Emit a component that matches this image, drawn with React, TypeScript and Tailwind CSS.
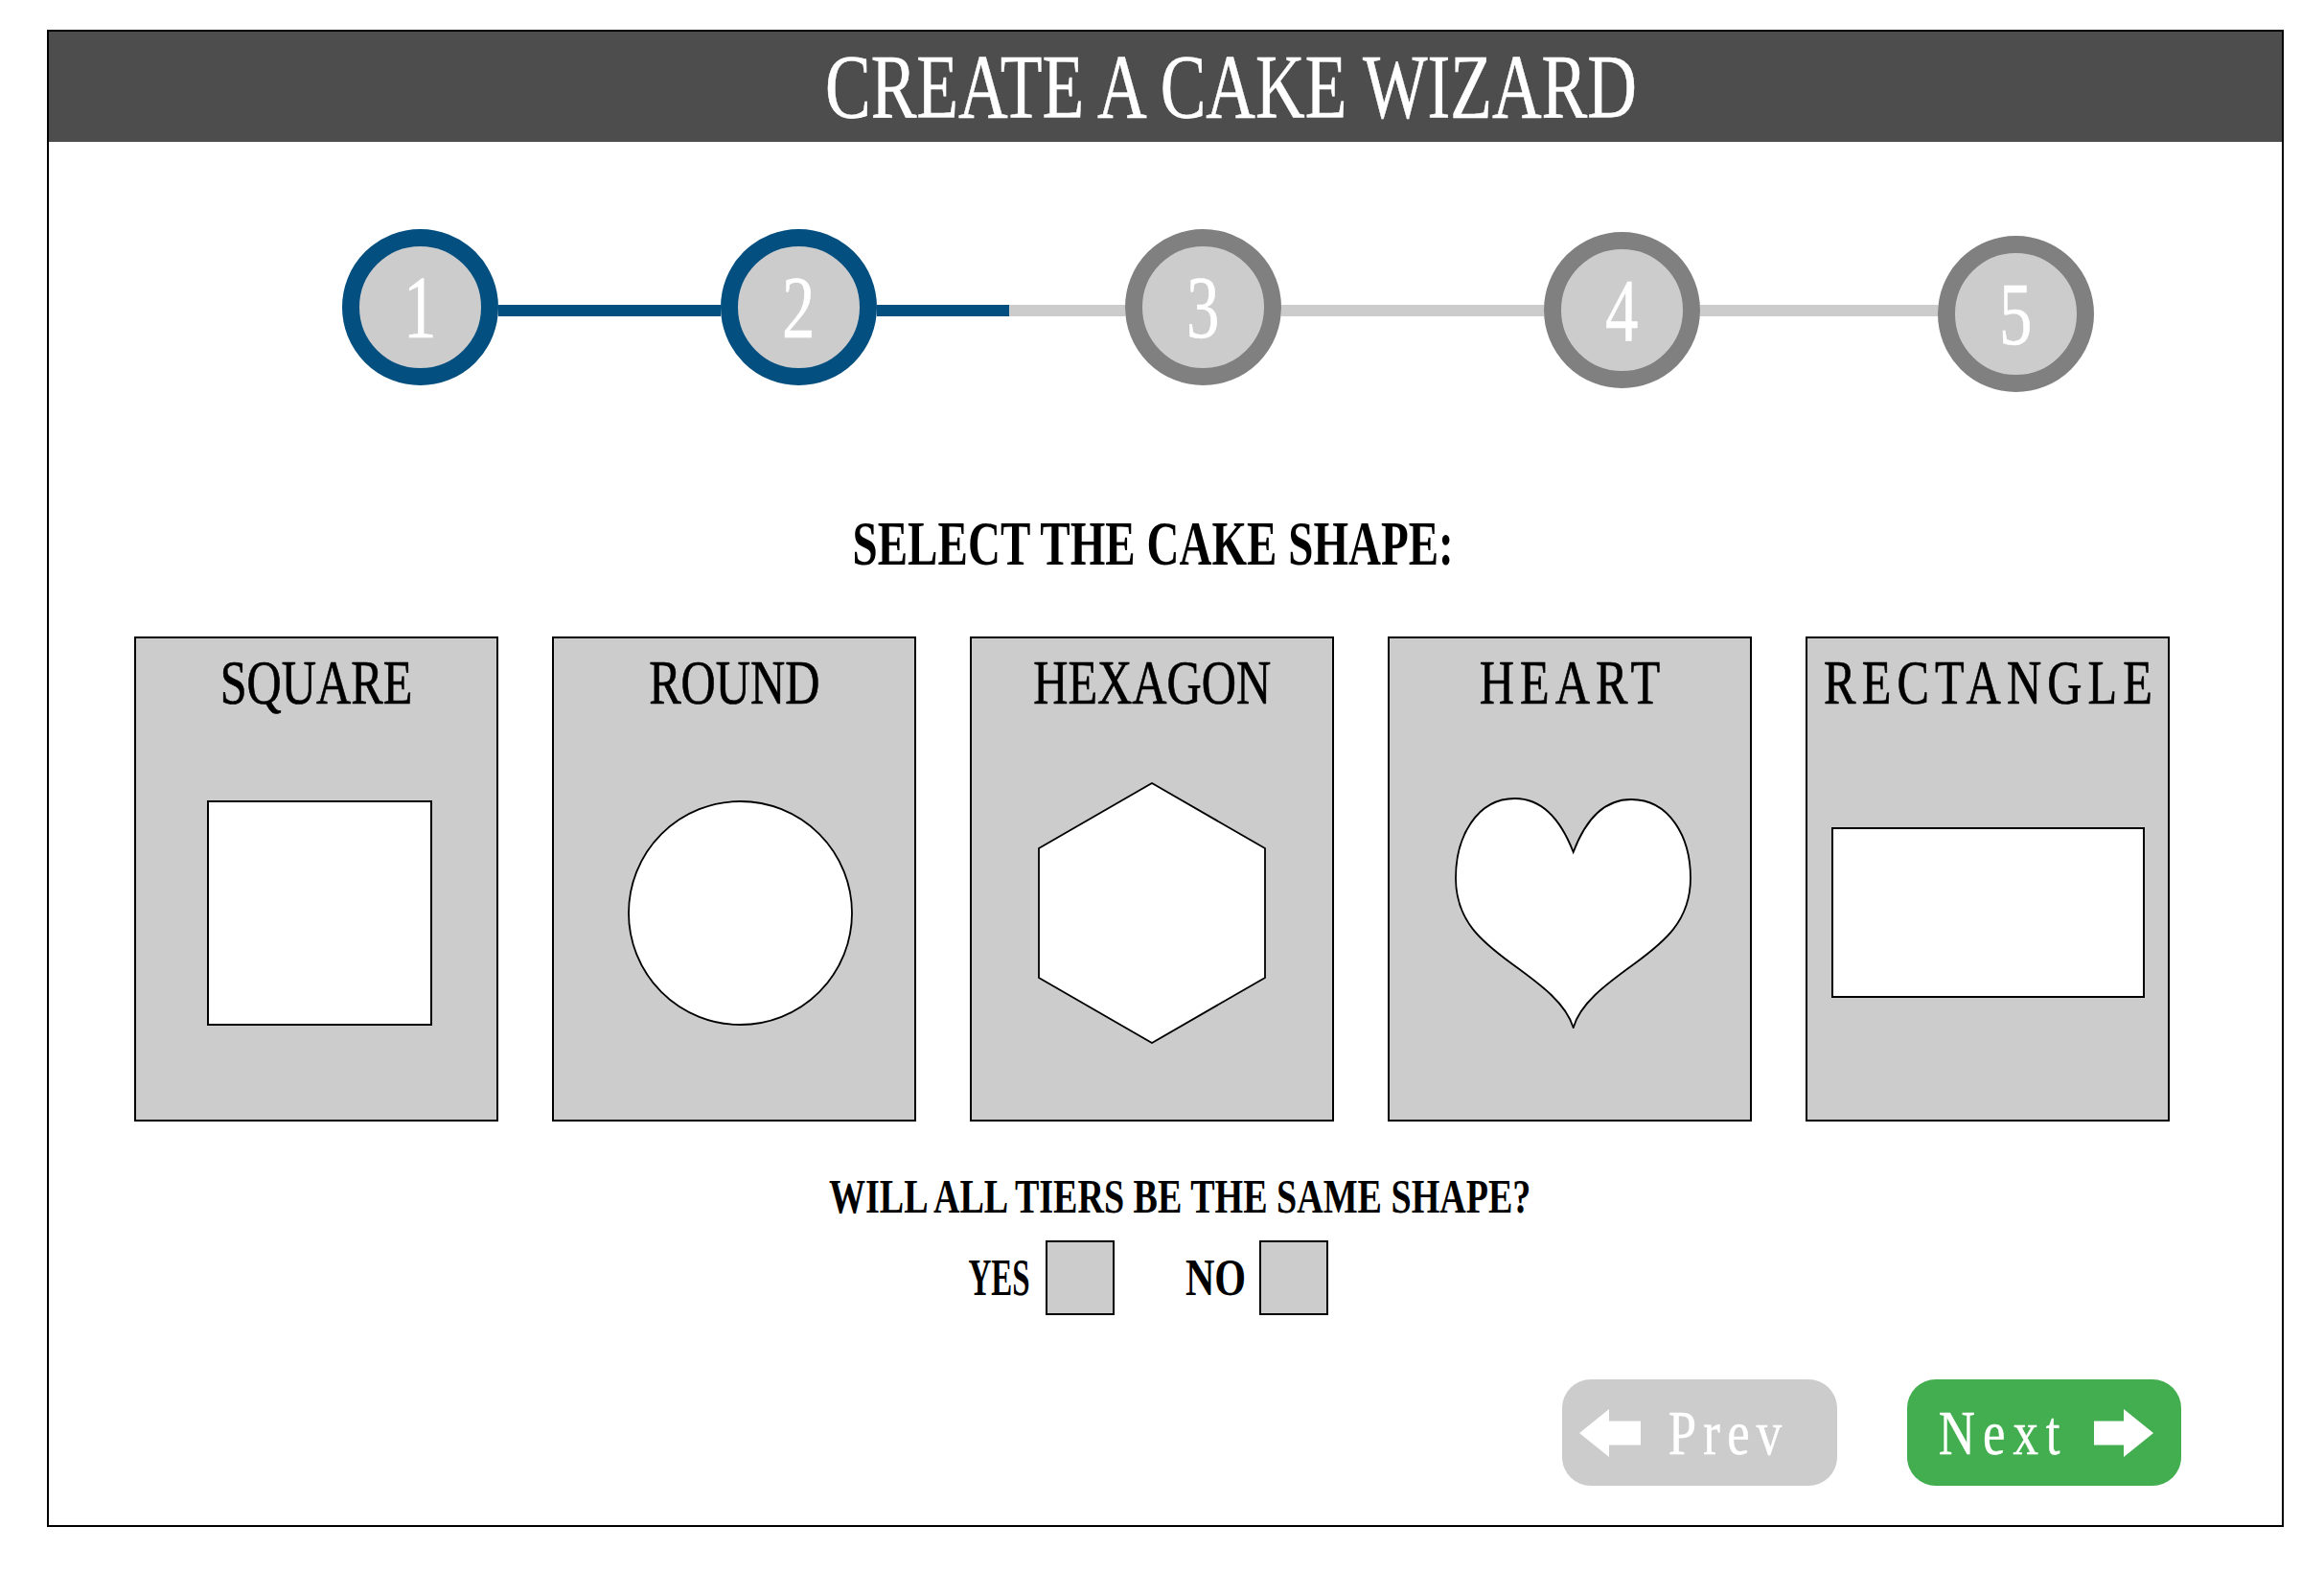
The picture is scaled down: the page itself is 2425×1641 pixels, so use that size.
import React from "react";

function Circle({ n, active, offset }: { n: string; active: boolean; offset: string }) {
  return (
    <div
      className={
        "w-[163px] h-[163px] shrink-0 rounded-full border-[18px] bg-[#cccccc] flex items-center justify-center " +
        (active ? "border-[#034f80] " : "border-[#808080] ") +
        offset
      }
    >
      <span className="inline-block text-[93px] leading-none text-white scale-x-[0.74] [-webkit-text-stroke:0.6px_white]">
        {n}
      </span>
    </div>
  );
}

function Card({ label, wide, children }: { label: string; wide?: boolean; children: React.ReactNode }) {
  return (
    <div className="w-[380px] h-[506px] shrink-0 border-2 border-black bg-[#cccccc] flex flex-col">
      <div className="pt-[13px] h-[79px] flex justify-center overflow-visible">
        <span
          className={
            "inline-block text-[66px] leading-none text-black whitespace-nowrap scale-x-[0.76] [-webkit-text-stroke:0.7px_black] " +
            (wide ? "tracking-[8px] pl-[8px]" : "")
          }
        >
          {label}
        </span>
      </div>
      <div className="mt-[57px] h-[300px] flex items-center justify-center">{children}</div>
    </div>
  );
}

export default function App() {
  return (
    <div className="w-[2425px] h-[1641px] bg-white font-['Liberation_Serif',serif] pl-[49px] pt-[31px]">
      <div className="w-[2334px] h-[1562px] border-2 border-black flex flex-col">
        {/* Header */}
        <div className="h-[115px] bg-[#4d4d4d] flex items-center justify-center pl-[136px]">
          <span className="inline-block text-[96px] leading-none text-white whitespace-nowrap scale-x-[0.745] [-webkit-text-stroke:0.6px_white]">
            CREATE A CAKE WIZARD
          </span>
        </div>

        {/* Stepper */}
        <div className="mt-[91px] h-[170px] flex items-start pl-[306px]">
          <Circle n="1" active offset="" />
          <div className="w-[232px] h-[12px] mt-[79px] bg-[#034f80]" />
          <Circle n="2" active offset="" />
          <div className="w-[259px] h-[12px] mt-[79px] flex">
            <div className="w-[138px] h-full bg-[#034f80]" />
            <div className="flex-1 h-full bg-[#cccccc]" />
          </div>
          <Circle n="3" active={false} offset="" />
          <div className="w-[274px] h-[12px] mt-[79px] bg-[#cccccc]" />
          <Circle n="4" active={false} offset="mt-[3px]" />
          <div className="w-[248px] h-[12px] mt-[79px] bg-[#cccccc]" />
          <Circle n="5" active={false} offset="mt-[7px]" />
        </div>

        {/* Select text */}
        <div className="mt-[126px] h-[65px] flex justify-center pr-[26px]">
          <span className="inline-block text-[65px] leading-none font-bold text-black whitespace-nowrap scale-x-[0.724]">
            SELECT THE CAKE SHAPE:
          </span>
        </div>

        {/* Cards */}
        <div className="mt-[64px] flex gap-[56px] pl-[89px]">
          <Card label="SQUARE">
            <svg width="235" height="235" viewBox="0 0 235 235" className="ml-[7px]">
              <rect x="1" y="1" width="233" height="233" fill="#fff" stroke="#000" strokeWidth="2" />
            </svg>
          </Card>
          <Card label="ROUND">
            <svg width="237" height="237" viewBox="0 0 237 237" className="ml-[12px]">
              <circle cx="118.5" cy="118.5" r="116.5" fill="#fff" stroke="#000" strokeWidth="1.8" />
            </svg>
          </Card>
          <Card label="HEXAGON">
            <svg width="238" height="273" viewBox="-1 -1 238 273">
              <polygon points="118,0 236,68 236,203 118,271 0,203 0,68" fill="#fff" stroke="#000" strokeWidth="1.8" />
            </svg>
          </Card>
          <Card label="HEART" wide>
            <svg width="247" height="241" viewBox="-1 -1 247 241" className="ml-[6px]">
              <path
                d="M122.7,56 C108,18 88,0 61.7,0 C22,0 0,40 0,83 C0,128 28,150 58,172 C90,195 115,214 122.7,239 C130,214 155,195 187,172 C217,150 245,128 245,83 C245,40 223,1 183,1 C157,1 137,18 122.7,56 Z"
                fill="#fff"
                stroke="#000"
                strokeWidth="1.8"
              />
            </svg>
          </Card>
          <Card label="RECTANGLE" wide>
            <svg width="327" height="178" viewBox="0 0 327 178">
              <rect x="1" y="1" width="325" height="176" fill="#fff" stroke="#000" strokeWidth="2" />
            </svg>
          </Card>
        </div>

        {/* Tiers question */}
        <div className="mt-[53px] h-[50px] flex justify-center pl-[30px]">
          <span className="inline-block text-[50px] leading-none font-bold text-black whitespace-nowrap scale-x-[0.761]">
            WILL ALL TIERS BE THE SAME SHAPE?
          </span>
        </div>

        {/* Yes / No */}
        <div className="mt-[21px] flex items-center pl-[960px]">
          <div className="w-[64px] flex justify-center">
            <span className="inline-block text-[54px] leading-none font-bold text-black whitespace-nowrap scale-x-[0.61]">
              YES
            </span>
          </div>
          <div className="ml-[16px] w-[72px] h-[78px] border-2 border-black bg-[#cccccc]" />
          <div className="ml-[74px] w-[63px] flex justify-center">
            <span className="inline-block text-[54px] leading-none font-bold text-black whitespace-nowrap scale-x-[0.78]">
              NO
            </span>
          </div>
          <div className="ml-[14px] w-[72px] h-[78px] border-2 border-black bg-[#cccccc]" />
        </div>

        {/* Buttons */}
        <div className="mt-[67px] flex justify-end pr-[105px] gap-[73px]">
          <div className="w-[287px] h-[111px] rounded-[30px] bg-[#cccccc] flex items-center pl-[18px]">
            <svg width="64" height="50" viewBox="0 0 64 50">
              <path d="M0,25 L31,0 L31,12.5 L64,12.5 L64,37.5 L31,37.5 L31,50 Z" fill="#fff" />
            </svg>
            <div className="ml-[29px] w-[117px] flex justify-center">
              <span className="inline-block text-[66px] leading-none text-white whitespace-nowrap tracking-[9px] pl-[9px] scale-x-[0.8] [-webkit-text-stroke:0.5px_white]">
                Prev
              </span>
            </div>
          </div>
          <div className="w-[286px] h-[111px] rounded-[30px] bg-[#42ae4f] flex items-center pl-[33px]">
            <div className="w-[127px] flex justify-center">
              <span className="inline-block text-[66px] leading-none text-white whitespace-nowrap tracking-[10px] pl-[10px] scale-x-[0.8] [-webkit-text-stroke:0.5px_white]">
                Next
              </span>
            </div>
            <svg width="62" height="50" viewBox="0 0 62 50" className="ml-[35px]">
              <path d="M62,25 L31,0 L31,12.5 L0,12.5 L0,37.5 L31,37.5 L31,50 Z" fill="#fff" />
            </svg>
          </div>
        </div>
      </div>
    </div>
  );
}
